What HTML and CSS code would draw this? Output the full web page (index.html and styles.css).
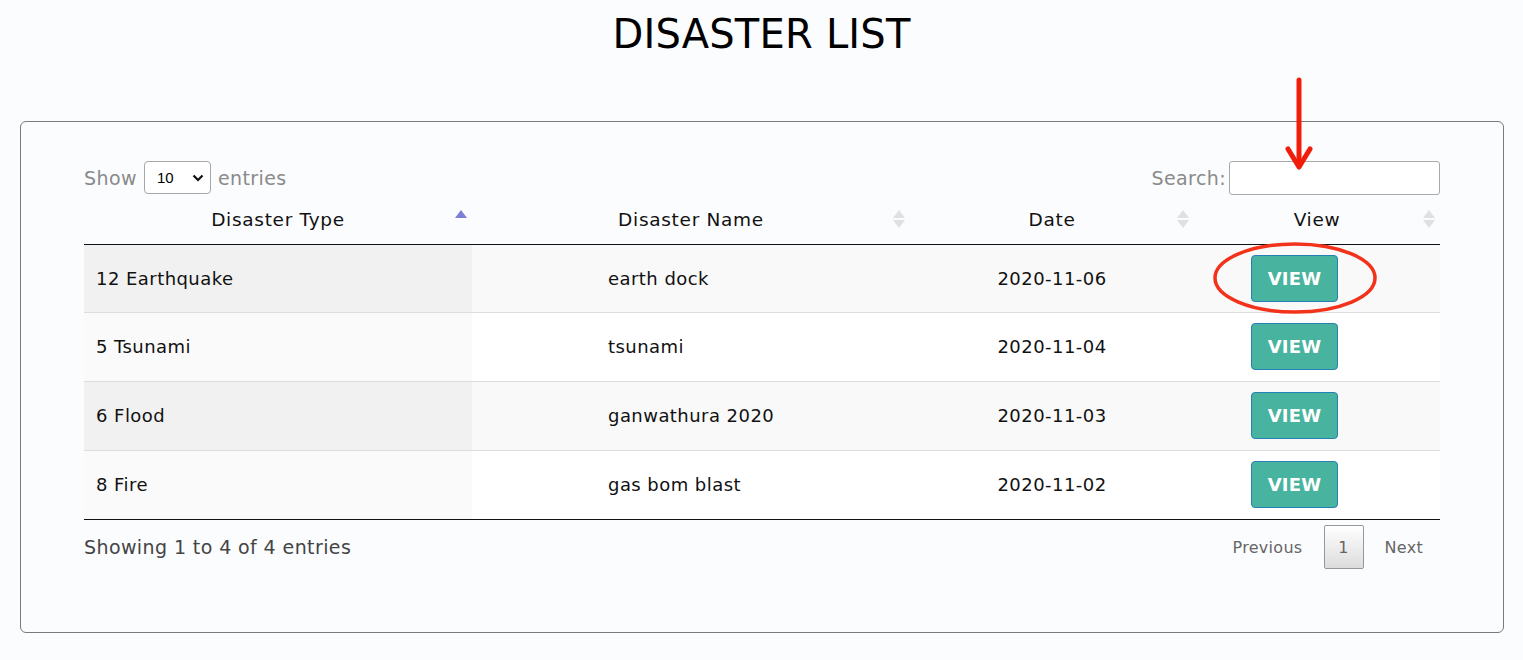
FILE: index.html
```html
<!DOCTYPE html>
<html>
<head>
<meta charset="utf-8">
<link rel="stylesheet" href="styles.css">
</head>
<body>
<h1 class="title">DISASTER LIST</h1>
<div class="card">
  <div class="controls">
    <label class="length">Show <span class="select">10 <svg width="12" height="8" viewBox="0 0 12 8"><path d="M1.5 1.5 6 6 10.5 1.5" fill="none" stroke="#111" stroke-width="2.2"/></svg></span> entries</label>
    <label class="search">Search:<span class="input"></span></label>
  </div>
  <table class="table">
    <colgroup><col class="c1"><col class="c2"><col class="c3"><col class="c4"></colgroup>
    <thead>
      <tr>
        <th><span>Disaster Type</span><i class="sort asc"></i></th>
        <th><span>Disaster Name</span><i class="sort both"></i></th>
        <th><span>Date</span><i class="sort both"></i></th>
        <th><span>View</span><i class="sort both"></i></th>
      </tr>
    </thead>
    <tbody>
      <tr class="odd"><td class="sorted">12 Earthquake</td><td class="name">earth dock</td><td class="date">2020-11-06</td><td class="act"><button class="btn">VIEW</button></td></tr>
      <tr class="even"><td class="sorted">5 Tsunami</td><td class="name">tsunami</td><td class="date">2020-11-04</td><td class="act"><button class="btn">VIEW</button></td></tr>
      <tr class="odd"><td class="sorted">6 Flood</td><td class="name">ganwathura 2020</td><td class="date">2020-11-03</td><td class="act"><button class="btn">VIEW</button></td></tr>
      <tr class="even"><td class="sorted">8 Fire</td><td class="name">gas bom blast</td><td class="date">2020-11-02</td><td class="act"><button class="btn">VIEW</button></td></tr>
    </tbody>
  </table>
  <div class="footer">
    <div class="info">Showing 1 to 4 of 4 entries</div>
    <div class="pager"><span class="pg">Previous</span><span class="pg cur">1</span><span class="pg last">Next</span></div>
  </div>
</div>
<svg class="annot" width="1523" height="660" viewBox="0 0 1523 660">
  <path d="M1299 80 L1299 160" stroke="#f21c0a" stroke-width="5" stroke-linecap="round" fill="none"/>
  <path d="M1288 149 L1299 167 L1310 149" stroke="#f21c0a" stroke-width="5" stroke-linecap="round" stroke-linejoin="round" fill="none"/>
  <ellipse cx="1295" cy="278" rx="80" ry="34" stroke="#f2321a" stroke-width="3.5" fill="none"/>
</svg>
</body>
</html>
```
FILE: styles.css
```css
* { box-sizing: border-box; }
html, body { margin: 0; padding: 0; }
body {
  background: #fbfcfe;
  font-family: "DejaVu Sans", "Noto Sans", sans-serif;
  color: #111;
  width: 1523px;
  height: 660px;
  overflow: hidden;
  position: relative;
}
.title {
  margin: 0;
  padding-top: 12px;
  height: 121px;
  text-align: center;
  font-size: 40px;
  line-height: 44px;
  font-weight: 400;
  letter-spacing: 0.2px;
  color: #000;
}
.card {
  margin: 0 19px 0 20px;
  height: 512px;
  border: 1px solid #7a7a7a;
  border-radius: 6px;
  padding: 38px 63px 0 63px;
}
.controls {
  display: flex;
  justify-content: space-between;
  align-items: center;
  height: 35px;
  color: #8a8a8a;
  font-size: 19px;
  letter-spacing: 0.4px;
}
.length { display: flex; align-items: center; gap: 7px; }
.select {
  display: inline-flex;
  align-items: center;
  justify-content: space-between;
  width: 67px;
  height: 33px;
  border: 1px solid #a8a8a8;
  border-radius: 4px;
  background: #fff;
  color: #000;
  font-size: 15px;
  letter-spacing: 0;
  padding: 0 6px 0 12px;
  font-family: "Liberation Sans", sans-serif;
}
.search { display: flex; align-items: center; gap: 3px; }
.input {
  display: inline-block;
  width: 211px;
  height: 34px;
  border: 1px solid #aaa;
  border-radius: 3px;
  background: #fff;
}
.table {
  width: 100%;
  border-collapse: collapse;
  table-layout: fixed;
  margin-top: 5px;
  font-size: 18px;
  letter-spacing: 0.45px;
}
.c1 { width: 388px; }
.c2 { width: 438px; }
.c3 { width: 284px; }
.c4 { width: 246px; }
th {
  position: relative;
  height: 44px;
  font-weight: 400;
  font-size: 18.5px;
  letter-spacing: 0.7px;
  text-align: center;
  border-bottom: 1px solid #111;
  padding: 0 18px 4px 18px;
  vertical-align: middle;
}
.sort { position: absolute; right: 7px; top: 10px; width: 10px; height: 18px; }
.sort.asc::before {
  content: ""; position: absolute; left: 0; top: 0;
  border-left: 6px solid transparent; border-right: 6px solid transparent;
  border-bottom: 8px solid #7b7fd6;
}
.sort.both::before, .sort.both::after {
  content: ""; position: absolute; left: 0;
  border-left: 6px solid transparent; border-right: 6px solid transparent;
}
.sort.both::before { top: 0; border-bottom: 8px solid #e0e0e0; }
.sort.both::after { top: 10px; border-top: 8px solid #e0e0e0; }
td {
  height: 69px;
  border-top: 1px solid #dddddd;
  padding: 0 12px;
  vertical-align: middle;
}
tbody tr:first-child td { border-top: none; height: 68px; }
tbody tr:last-child td { border-bottom: 1px solid #111; }
tr.odd td { background: #f9f9f9; }
tr.even td { background: #ffffff; }
tr.odd td.sorted { background: #f1f1f1; }
tr.even td.sorted { background: #fafafa; }
td.name { padding-left: 136px; }
td.date { text-align: center; }
td.act { padding-left: 57px; }
.btn {
  width: 87px;
  height: 47px;
  background: #48b39e;
  border: 1px solid #2780b4;
  border-radius: 4px;
  color: #fff;
  font-family: "DejaVu Sans", sans-serif;
  font-weight: 700;
  font-size: 18px;
  padding: 0;
  letter-spacing: 0.2px;
}
.footer {
  display: flex;
  justify-content: space-between;
  align-items: center;
  margin-top: 5px;
  height: 45px;
  font-size: 19px;
  color: #444;
}
.info { color: #444; letter-spacing: 0.4px; }
.pager { display: flex; align-items: center; font-size: 16px; color: #666; letter-spacing: 0.3px; }
.pg { padding: 0 20px; }
.pg.last { padding-right: 17px; }
.pg.cur {
  display: inline-flex; align-items: center; justify-content: center;
  width: 40px; height: 44px; padding: 0;
  border: 1px solid #979797; border-radius: 2px;
  background: linear-gradient(#ffffff, #dcdcdc);
  margin: 0 1px;
}
.annot { position: absolute; left: 0; top: 0; pointer-events: none; }
```
